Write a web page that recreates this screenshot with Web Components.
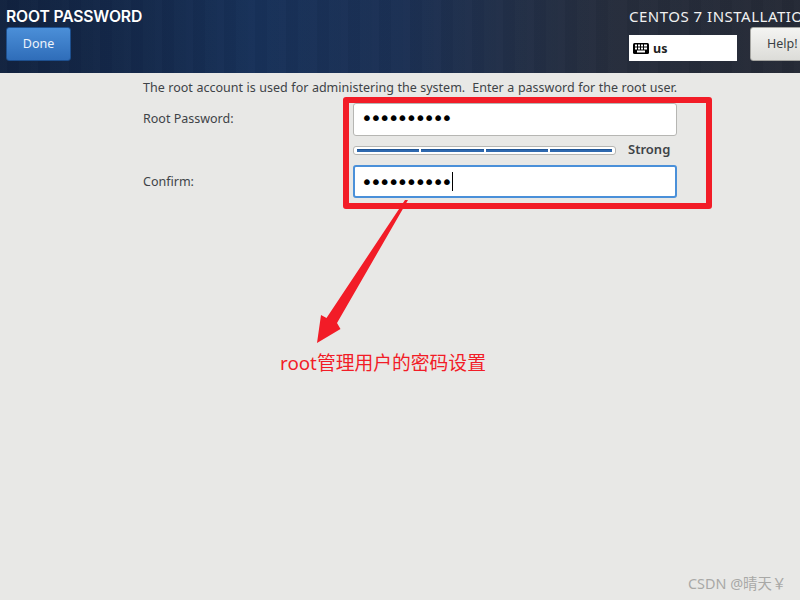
<!DOCTYPE html>
<html>
<head>
<meta charset="utf-8">
<title>Root password</title>
<style>
  html, body { margin: 0; width: 800px; height: 600px; overflow: hidden; background: #e8e8e6; }
</style>
</head>
<body>
<root-page></root-page>

<script>
// top bar with the title, Done button, keyboard box and Help button
var template_bar = document.createElement("template");
template_bar.innerHTML = `
<style>
  :host {
    display: flex; justify-content: space-between; height: 73px; box-sizing: border-box; padding: 8px 0 0 6px;
    overflow: hidden; color: #fff; font-family: "Noto Sans", sans-serif;
    background:
      repeating-linear-gradient(90deg, rgba(255,255,255,.012) 0 7px, rgba(0,0,0,.02) 7px 19px, rgba(255,255,255,.006) 19px 31px),
      linear-gradient(90deg, #11223f 0%, #14294b 18%, #173159 32%, #1b3054 50%, #212f48 63%, #262d3c 77%, #252a36 100%);
  }
  .left, .right { display: flex; flex-direction: column; }
  .left { width: 140px; }
  .title { font: 600 15.7px/17px Inter, sans-serif; white-space: nowrap; letter-spacing: -.15px; }
  .done {
    box-sizing: border-box; width: 65px; height: 34px; margin-top: 2px; border: 1px solid #1d4f8e; border-radius: 3px;
    background: linear-gradient(#4b8fd8, #2f6db9); font-size: 12.5px; line-height: 31px; text-align: center; color: #eef4fb;
  }
  .right { width: 171px; flex: none; }
  .product { font: 15px/17px "Noto Sans", sans-serif; color: #f1f1f1; white-space: nowrap; letter-spacing: .5px; }
  .row { display: flex; align-items: flex-start; margin-top: 2px; }
  .kbd {
    box-sizing: border-box; flex: none; display: flex; align-items: center; gap: 4px; width: 108px; height: 26px; margin-top: 8px; padding-left: 4px;
    background: #fff; color: #222; font: 700 12.5px "Noto Sans", sans-serif;
  }
  .help {
    box-sizing: border-box; flex: none; width: 66px; height: 34px; margin-left: 13px; border: 1px solid #a5a5a1; border-radius: 3px;
    background: linear-gradient(#f4f4f2, #dcdcd8); color: #3a3f44; font-size: 12.5px; line-height: 31px; padding-left: 16px;
  }
</style>
<div class="left">
  <div class="title">ROOT PASSWORD</div>
  <div class="done">Done</div>
</div>
<div class="right">
  <div class="product">CENTOS 7 INSTALLATION</div>
  <div class="row">
    <div class="kbd">
      <svg width="16" height="11" viewBox="0 0 16 11"><rect width="16" height="11" rx="1.5" fill="#000"/><path d="M2 1.5h2v2H2zM5 1.5h2v2H5zM8 1.5h2v2H8zM11 1.5h3v2h-3zM2 4.5h2v2H2zM5 4.5h2v2H5zM8 4.5h2v2H8zM11 4.5h3v2h-3zM4 7.5h8v2H4z" fill="#fff"/></svg>
      <span>us</span>
    </div>
    <div class="help">Help!</div>
  </div>
</div>
`;
class TopBar extends HTMLElement {
  constructor(){
    super();
    this.attachShadow({mode:"open"}).appendChild(template_bar.content.cloneNode(true));
  }
}
customElements.define("top-bar", TopBar);

// password entry, dots come from the attribute
var template_entry = document.createElement("template");
template_entry.innerHTML = `
<style>
  :host {
    display: flex; align-items: center; box-sizing: border-box; width: 324px; height: 33px; padding: 0 0 3px 7px;
    background: #fff; border: 1px solid #b6b6b3; border-radius: 3px;
    color: #000; font: 20px/1 "DejaVu Sans", sans-serif;
  }
  :host([focused]) { border: 2px solid #4a90d9; padding: 0 0 0 6px; }
  .dots { white-space: nowrap; letter-spacing: -2.9px; }
  .caret { display: none; width: 1px; height: 19px; background: #000; margin-left: 2px; }
  :host([focused]) .caret { display: block; }
</style>
<span class="dots"></span><span class="caret"></span>
`;
class PasswordEntry extends HTMLElement {
  constructor(){
    super();
    this.attachShadow({mode:"open"}).appendChild(template_entry.content.cloneNode(true));
  }
  connectedCallback(){
    this.shadowRoot.querySelector(".dots").textContent = "\u2022".repeat(Number(this.getAttribute("length")));
  }
}
customElements.define("password-entry", PasswordEntry);

// four blue segments and the label next to them
var template_strength = document.createElement("template");
template_strength.innerHTML = `
<style>
  :host { display: flex; align-items: center; height: 20px; color: #3e4347; font: 600 13px "Noto Sans", sans-serif; }
  .track {
    box-sizing: border-box; display: flex; gap: 2px; width: 263px; height: 9px; padding: 2px 3px;
    background: #fff; border: 1px solid #b6b6b3; border-radius: 3px;
  }
  .track i { flex: 1; background: #2f69ae; border-top: 1px solid #1f5596; }
  .label { margin-left: 12px; position: relative; top: -1px; }
</style>
<div class="track"><i></i><i></i><i></i><i></i></div>
<span class="label"><slot></slot></span>
`;
class StrengthBar extends HTMLElement {
  constructor(){
    super();
    this.attachShadow({mode:"open"}).appendChild(template_strength.content.cloneNode(true));
  }
}
customElements.define("strength-bar", StrengthBar);

// the form under the bar
var template_form = document.createElement("template");
template_form.innerHTML = `
<style>
  :host {
    display: block; padding: 7px 0 0 143px; color: #3e4347; font: 12.5px/15px "Noto Sans", sans-serif;
  }
  .intro { white-space: nowrap; word-spacing: .32px; }
  .grid { display: grid; grid-template-columns: 210px 324px; align-items: center; margin-top: 8px; }
  .first-label { padding-bottom: 3px; }
  .first { height: 33px; }
  strength-bar { margin-top: 4px; margin-bottom: 5px; }
</style>
<div class="intro">The root account is used for administering the system.&nbsp; Enter a password for the root user.</div>
<div class="grid">
  <span class="first-label">Root Password:</span><password-entry class="first" length="10"></password-entry>
  <span></span><strength-bar>Strong</strength-bar>
  <span>Confirm:</span><password-entry focused length="10"></password-entry>
</div>
`;
class RootForm extends HTMLElement {
  constructor(){
    super();
    this.attachShadow({mode:"open"}).appendChild(template_form.content.cloneNode(true));
  }
}
customElements.define("root-form", RootForm);

// red marks drawn over the screenshot
var template_notes = document.createElement("template");
template_notes.innerHTML = `
<style>
  :host { display: block; position: absolute; left: 0; top: 0; width: 800px; height: 600px; pointer-events: none; }
  .box { position: absolute; left: 343px; top: 97px; width: 369px; height: 112px; box-sizing: border-box; border: 6px solid #f21c27; border-radius: 3px; }
  svg { position: absolute; left: 0; top: 0; }
  .note { position: absolute; left: 280px; top: 350px; color: #f21c27; font: 18.8px/26px "Noto Sans", "Noto Sans CJK SC", sans-serif; white-space: nowrap; }
  .mark { position: absolute; left: 688px; top: 574px; color: #a8a8a6; font: 14.4px/20px "Noto Sans", "Noto Sans CJK SC", sans-serif; white-space: nowrap; }
</style>
<div class="box"></div>
<svg width="800" height="600" viewBox="0 0 800 600"><path d="M408 200 L337 323 L340.5 329 L317 343 L321 315 L326.5 318 L405 200 Z" fill="#f21c27"/></svg>
<div class="note">root管理用户的密码设置</div>
<div class="mark">CSDN @晴天￥</div>
`;
class RedNotes extends HTMLElement {
  constructor(){
    super();
    this.attachShadow({mode:"open"}).appendChild(template_notes.content.cloneNode(true));
  }
}
customElements.define("red-notes", RedNotes);

var template_page = document.createElement("template");
template_page.innerHTML = `
<style>
  :host { display: block; position: relative; width: 800px; height: 600px; overflow: hidden; background: #e8e8e6; }
</style>
<top-bar></top-bar>
<root-form></root-form>
<red-notes></red-notes>
`;
class RootPage extends HTMLElement {
  constructor(){
    super();
    this.attachShadow({mode:"open"}).appendChild(template_page.content.cloneNode(true));
  }
}
customElements.define("root-page", RootPage);
</script>
</body>
</html>
